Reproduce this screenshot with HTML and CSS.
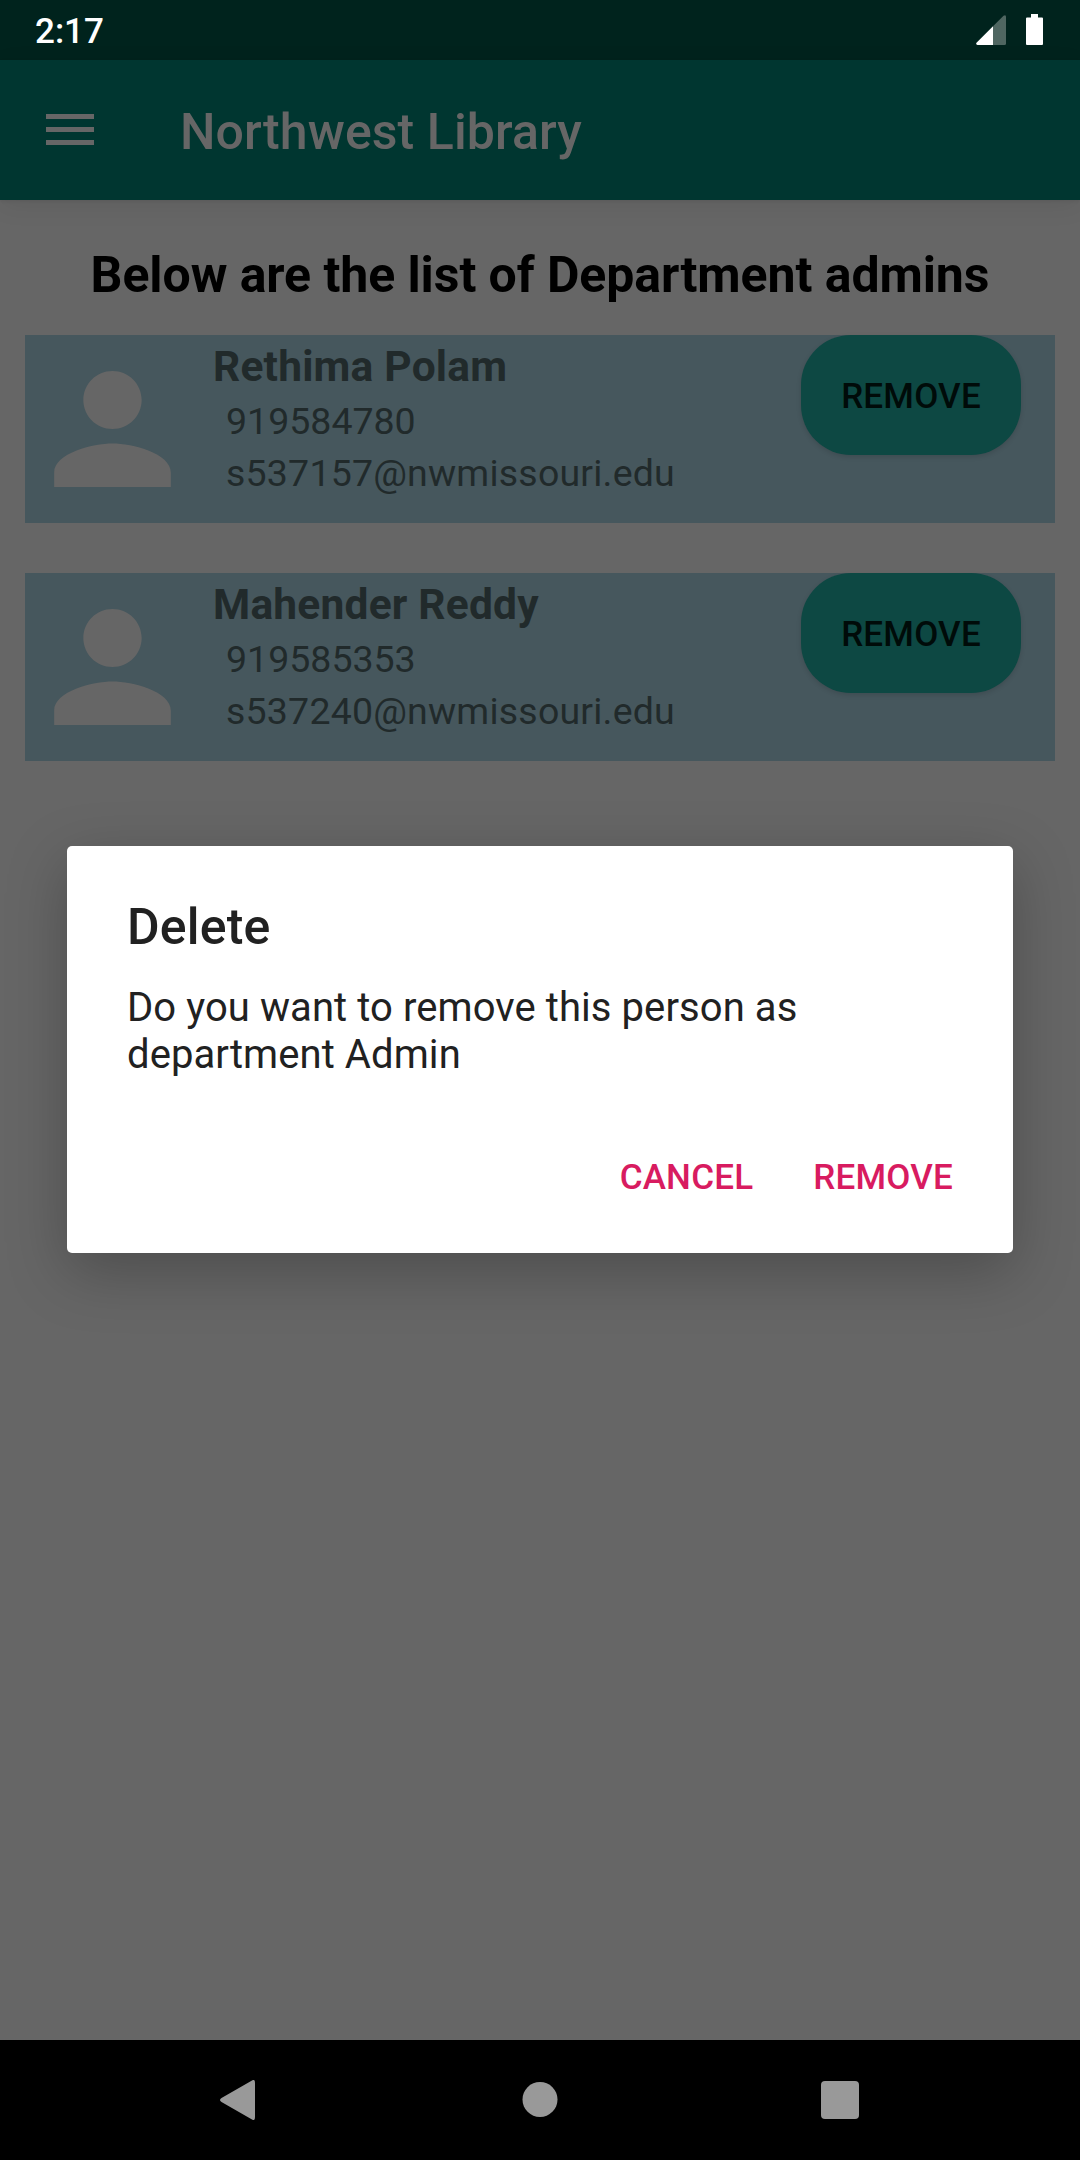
FILE: index.html
```html
<!DOCTYPE html>
<html lang="en">
<head>
<meta charset="utf-8">
<title>Northwest Library</title>
<link rel="stylesheet" href="styles.css">
</head>
<body>
<div class="screen">
  <header class="status">
    <span class="clock">2:17</span>
    <svg class="signal" viewBox="0 0 30 30"><path d="M17 11.300 27.500 .800Q30-.800 30 2V28.500Q30 30 28.500 30H17Z" fill="#4f6661"/><path d="M17 11.300V30H1.500Q-.500 29.500 .500 27.800Z" fill="#fff"/></svg>
    <svg class="battery" viewBox="0 0 17 31"><path d="M5 0h7v3.500h4q1 0 1 1V30q0 1-1 1H1q-1 0-1-1V4.500q0-1 1-1h4Z" fill="#fff"/></svg>
  </header>
  <div class="appbar">
    <svg class="menu" viewBox="0 0 24 24"><path d="M2.400 6h19.200v2H2.400zM2.400 11.200h19.200v2H2.400zM2.400 16.400h19.200v2H2.400z" fill="#666"/></svg>
    <h1 class="title">Northwest Library</h1>
  </div>
  <main class="content">
    <h2 class="heading">Below are the list of Department admins</h2>
    <section class="card">
      <svg class="avatar" viewBox="0 0 24 24" preserveAspectRatio="none"><path d="M12 12c2.210 0 4-1.790 4-4s-1.790-4-4-4-4 1.790-4 4 1.790 4 4 4zm0 2c-2.670 0-8 1.340-8 4v2h16v-2c0-2.660-5.330-4-8-4z" fill="#666"/></svg>
      <div class="info">
        <h3 class="name">Rethima Polam</h3>
        <p class="line">919584780</p>
        <p class="line email">s537157@nwmissouri.edu</p>
      </div>
      <button class="pill">REMOVE</button>
    </section>
    <section class="card">
      <svg class="avatar" viewBox="0 0 24 24" preserveAspectRatio="none"><path d="M12 12c2.210 0 4-1.790 4-4s-1.790-4-4-4-4 1.790-4 4 1.790 4 4 4zm0 2c-2.670 0-8 1.340-8 4v2h16v-2c0-2.660-5.330-4-8-4z" fill="#666"/></svg>
      <div class="info">
        <h3 class="name">Mahender Reddy</h3>
        <p class="line">919585353</p>
        <p class="line email">s537240@nwmissouri.edu</p>
      </div>
      <button class="pill">REMOVE</button>
    </section>
  </main>
  <nav class="nav">
    <svg class="key" viewBox="0 0 40 40"><path d="M35 .500Q38-1.500 38 3V37Q38 41.500 35 39.500L4.500 22Q1.500 20 4.500 18Z" fill="#999"/></svg>
    <svg class="key" viewBox="0 0 40 40"><circle cx="21" cy="19.500" r="17.500" fill="#999"/></svg>
    <svg class="key" viewBox="0 0 40 40"><rect x="1" y="1" width="38" height="38" rx="4" fill="#999"/></svg>
  </nav>
  <div class="dialog" role="dialog">
    <h2 class="dialog-title">Delete</h2>
    <p class="message">Do you want to remove this person as<br>department Admin</p>
    <div class="actions">
      <button class="action">CANCEL</button>
      <button class="action">REMOVE</button>
    </div>
  </div>
</div>
</body>
</html>
```
FILE: styles.css
```css
* { box-sizing: border-box; margin: 0; padding: 0; }
body { width: 1080px; height: 2160px; overflow: hidden; font-family: Roboto, sans-serif; background: #666; }
button { border: 0; background: none; font: 500 35px/41px Roboto, sans-serif; letter-spacing: .2px; }
.screen { position: relative; display: flex; flex-direction: column; width: 1080px; height: 2160px; }
.status { display: flex; height: 60px; padding: 0 37px 0 35px; background: #00231d; color: #fff; }
.clock { margin-right: auto; font: 500 35px/41px Roboto, sans-serif; padding-top: 11px; }
.signal { width: 30px; height: 30px; margin: 15px 20px 0 0; }
.battery { width: 17px; height: 31px; margin-top: 14px; }
.appbar { display: flex; align-items: center; gap: 80px; height: 140px; padding-left: 40px; background: #003630; box-shadow: 0 6px 24px rgba(0, 0, 0, .07), 0 1px 3px rgba(0, 0, 0, .08); }
.menu { width: 60px; height: 60px; margin-bottom: 2px; }
.title { font-size: 50px; font-weight: 500; line-height: 60px; letter-spacing: .1px; color: #666; padding-top: 4px; }
.content { flex: 1; display: flex; flex-direction: column; gap: 50px; padding: 46px 25px 0; }
.heading { height: 67px; margin-bottom: -28px; font-size: 50px; line-height: 59px; font-weight: 700; letter-spacing: -.07px; text-align: center; color: #000; }
.card { display: flex; align-items: flex-start; height: 188px; padding-right: 34px; background: #46575d; }
.avatar { width: 175px; height: 174px; margin-top: 7px; }
.info { flex: 1; padding: 1px 0 0 13px; color: #212a2b; }
.name { font-size: 42.500px; line-height: 62px; font-weight: 700; letter-spacing: .2px; margin-bottom: -3px; }
.line { padding-left: 13px; font-size: 37.500px; line-height: 52px; }
.email { letter-spacing: .2px; }
.pill { width: 220px; height: 120px; padding-top: 2px; border-radius: 50px; background: #0d4843; color: #000b09; box-shadow: 0 2px 5px rgba(0, 0, 0, .13); }
.nav { display: flex; align-items: center; justify-content: space-between; height: 120px; padding: 0 220px 0 217px; background: #000; }
.key { width: 40px; height: 40px; }
.dialog { position: absolute; left: 67px; top: 846px; width: 946px; height: 407px; padding: 51px 60px 0; border-radius: 5px; background: #fff; color: #212121; box-shadow: 0 18px 60px rgba(0, 0, 0, .25); }
.dialog-title { font-size: 50px; font-weight: 500; line-height: 60px; letter-spacing: .2px; }
.message { margin-top: 27px; font-size: 40px; line-height: 47px; letter-spacing: .08px; }
.actions { display: flex; justify-content: flex-end; gap: 60px; margin-top: 79px; }
.action { color: #d81b60; }
```
